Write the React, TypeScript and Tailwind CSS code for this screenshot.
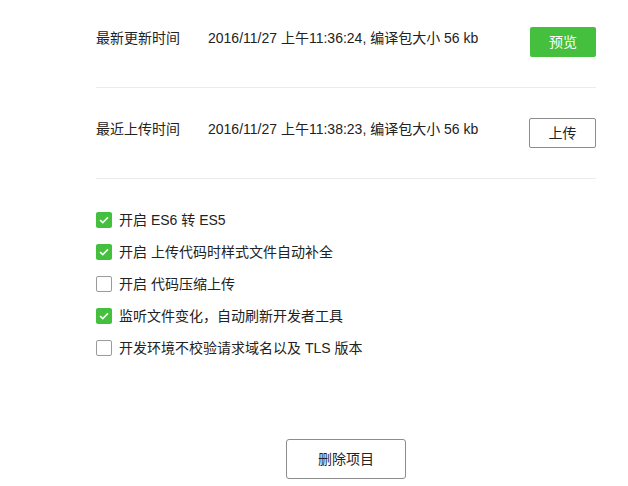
const font = {
  fontFamily: '"Liberation Sans", Arial, "Noto Sans CJK SC", sans-serif',
};

const rows = [
  {
    label: "最新更新时间",
    value: "2016/11/27 上午11:36:24, 编译包大小 56 kb",
    action: "预览",
    primary: true,
  },
  {
    label: "最近上传时间",
    value: "2016/11/27 上午11:38:23, 编译包大小 56 kb",
    action: "上传",
    primary: false,
  },
];

const options = [
  { label: "开启 ES6 转 ES5", checked: true },
  { label: "开启 上传代码时样式文件自动补全", checked: true },
  { label: "开启 代码压缩上传", checked: false },
  { label: "监听文件变化，自动刷新开发者工具", checked: true },
  { label: "开发环境不校验请求域名以及 TLS 版本", checked: false },
];

function Checkbox({ checked }: { checked: boolean }) {
  if (checked) {
    return (
      <span className="flex h-4 w-4 items-center justify-center rounded-[2px] bg-[#44c03e]">
        <svg width="10" height="8" viewBox="0 0 10 8" fill="none">
          <path d="M1 4l2.8 2.6L9 1.2" stroke="#fff" strokeWidth="1.6" />
        </svg>
      </span>
    );
  }
  return <span className="h-4 w-4 rounded-[2px] border border-[#9a9a9a] bg-white" />;
}

export default function App() {
  return (
    <div className="min-h-[486px] w-[628px] bg-white text-[14px] text-[#222]" style={font}>
      <div className="ml-[96px] w-[500px]">
        {rows.map((row, i) => (
          <div
            key={row.label}
            className={`flex items-start border-b border-[#ececec] pb-[30px] ${i === 0 ? "pt-[27px]" : "pt-[30px]"}`}
          >
            <span className="w-[112px] leading-[22px]">{row.label}</span>
            <span className="flex-1 leading-[22px]">{row.value}</span>
            {row.primary ? (
              <button className="h-[30px] w-[66px] rounded-[2px] bg-[#44c03e] text-[14px] text-white">
                {row.action}
              </button>
            ) : (
              <button className="h-[30px] w-[67px] rounded-[2px] border border-[#8c8c8c] bg-white text-[14px] text-[#222]">
                {row.action}
              </button>
            )}
          </div>
        ))}

        <div className="mt-[25px] flex flex-col">
          {options.map((opt) => (
            <label key={opt.label} className="flex h-[32px] items-center gap-[7px]">
              <Checkbox checked={opt.checked} />
              <span>{opt.label}</span>
            </label>
          ))}
        </div>

        <div className="mt-[75px] flex justify-center">
          <button className="h-[40px] w-[120px] rounded-[3px] border border-[#8c8c8c] bg-white text-[14px] text-[#222]">
            删除项目
          </button>
        </div>
      </div>
    </div>
  );
}
